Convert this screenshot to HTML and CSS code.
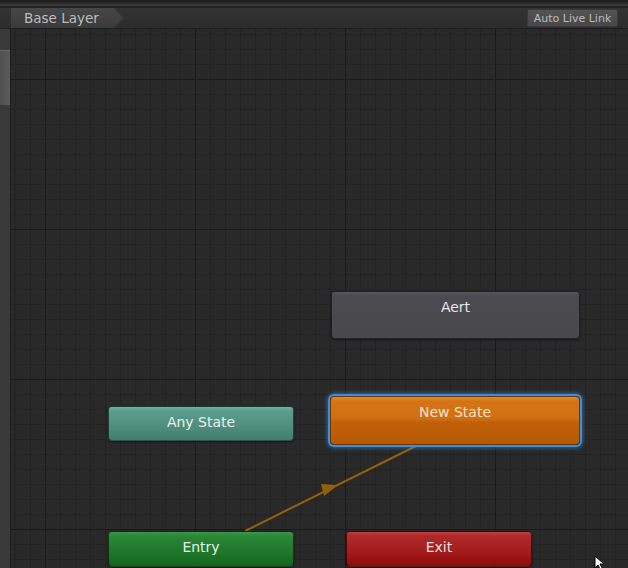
FILE: index.html
```html
<!DOCTYPE html>
<html>
<head>
<meta charset="utf-8">
<link rel="stylesheet" href="styles.css">
</head>
<body>
<div class="app">
  <div class="topstrip"></div>
  <div class="toolbar">
    <div class="crumb">Base Layer</div>
    <div class="spacer"></div>
    <div class="livelink">Auto Live Link</div>
    <div class="tbend"></div>
  </div>
  <div class="main">
    <div class="side"><div class="thumb"></div></div>
    <div class="canvas">
      <svg class="links" width="617" height="539" viewBox="0 0 617 539">
        <line x1="234" y1="502" x2="407" y2="416" stroke="#94600e" stroke-width="2"/>
        <polygon points="327,456 313,467 310,455" fill="#94600e"/>
      </svg>
      <div class="node gray n-aert">Aert</div>
      <div class="node orange n-new">New State</div>
      <div class="node teal n-any">Any State</div>
      <div class="node green n-entry">Entry</div>
      <div class="node red n-exit">Exit</div>
      <svg class="cursor" width="12" height="16" viewBox="0 0 12 16">
        <path d="M1 1 L1 13 L4 10 L6.5 15 L8.5 14 L6 9 L10 9 Z" fill="#ffffff" stroke="#000" stroke-width="1"/>
      </svg>
    </div>
  </div>
</div>
</body>
</html>
```
FILE: styles.css
```css
* { box-sizing: border-box; }
html, body { margin: 0; padding: 0; background: #282828; }
body { width: 628px; height: 568px; overflow: hidden; font-family: "DejaVu Sans", "Liberation Sans", sans-serif; }
.app { display: flex; flex-direction: column; width: 628px; height: 568px; }
.topstrip {
  height: 8px;
  background: linear-gradient(to bottom, #1c1c1c 0, #1c1c1c 2px, #2a2a2a 2px, #2a2a2a 4px, #383838 4px, #383838 6px, #222 6px);
}
.toolbar {
  height: 21px; display: flex; align-items: stretch;
  background: linear-gradient(to bottom, #333 0, #2c2c2c 100%);
  border-bottom: 1px solid #1e1e1e;
}
.crumb {
  margin-left: 11px; width: 112px; padding-left: 13px;
  font-size: 13.5px; line-height: 21px; color: #bdbdbd;
  background: linear-gradient(to bottom, #474747, #3a3a3a);
  clip-path: polygon(0 0, 103px 0, 112px 50%, 103px 100%, 0 100%);
}
.spacer { flex: 1; }
.livelink {
  width: 91px; margin: 1px 0 1px 0;
  font-size: 11px; line-height: 18px; color: #bcbcbc; text-align: center;
  background: linear-gradient(to bottom, #535353, #474747);
  border: 1px solid #3a3a3a; border-radius: 2px;
}
.tbend { width: 10px; }
.main { flex: 1; display: flex; min-height: 0; }
.side {
  width: 11px; background: #393939; border-right: 1px solid #1e1e1e;
  padding-top: 21px;
}
.thumb { height: 55px; width: 10px; background: linear-gradient(to right, #505050, #5a5a5a); border-top: 1px solid #666; }
.canvas {
  flex: 1; position: relative; overflow: hidden;
  background-color: #292929;
  background-image:
    linear-gradient(to right, #1a1a1a 1px, transparent 1px),
    linear-gradient(to bottom, #1a1a1a 1px, transparent 1px),
    linear-gradient(to right, #232323 1px, transparent 1px),
    linear-gradient(to bottom, #232323 1px, transparent 1px);
  background-size: 150px 100%, 100% 150px, 15px 100%, 100% 15px;
  background-position: 34px 0, 0 50px, 4px 0, 0 5px;
}
.links { position: absolute; left: 0; top: 0; }
.node {
  position: absolute; text-align: center; font-size: 14px;
  border-radius: 4px; border: 1px solid rgba(0,0,0,0.55);
  box-shadow: 0 1px 2px rgba(0,0,0,0.5);
}
.gray {
  color: #e6e6e6; padding-top: 5px; line-height: 20px;
  background: linear-gradient(to bottom, #57575c 0, #4a4a50 4px, #48484d 100%);
}
.orange {
  color: #f6e3c8; padding-top: 5px; line-height: 20px;
  background: linear-gradient(to bottom, #e08a2c 0, #d47416 4px, #cf7012 45%, #bf6008 55%, #b85805 100%);
  border: 1px solid #6a3a08;
  box-shadow: 0 0 0 2px #3f8ed6, 0 0 4px 3px rgba(60,140,215,0.6);
}
.teal {
  color: #e9f4ef; line-height: 31px;
  background: linear-gradient(to bottom, #6fb0a0 0, #5a9e8c 4px, #52917f 50%, #417d6c 100%);
}
.green {
  color: #e6f2e6; line-height: 31px;
  background: linear-gradient(to bottom, #3a9a4a 0, #2a8838 4px, #207a2e 50%, #14661f 100%);
}
.red {
  color: #f2dede; line-height: 31px;
  background: linear-gradient(to bottom, #c24040 0, #ae2a2a 4px, #a61f1f 50%, #8e0b0b 100%);
}
.n-aert { left: 320px; top: 262px; width: 249px; height: 48px; }
.n-new { left: 319px; top: 367px; width: 250px; height: 49px; }
.n-any { left: 97px; top: 377px; width: 186px; height: 35px; }
.n-entry { left: 97px; top: 502px; width: 186px; height: 36px; }
.n-exit { left: 335px; top: 502px; width: 186px; height: 36px; }
.cursor { position: absolute; left: 583px; top: 526px; }
```
